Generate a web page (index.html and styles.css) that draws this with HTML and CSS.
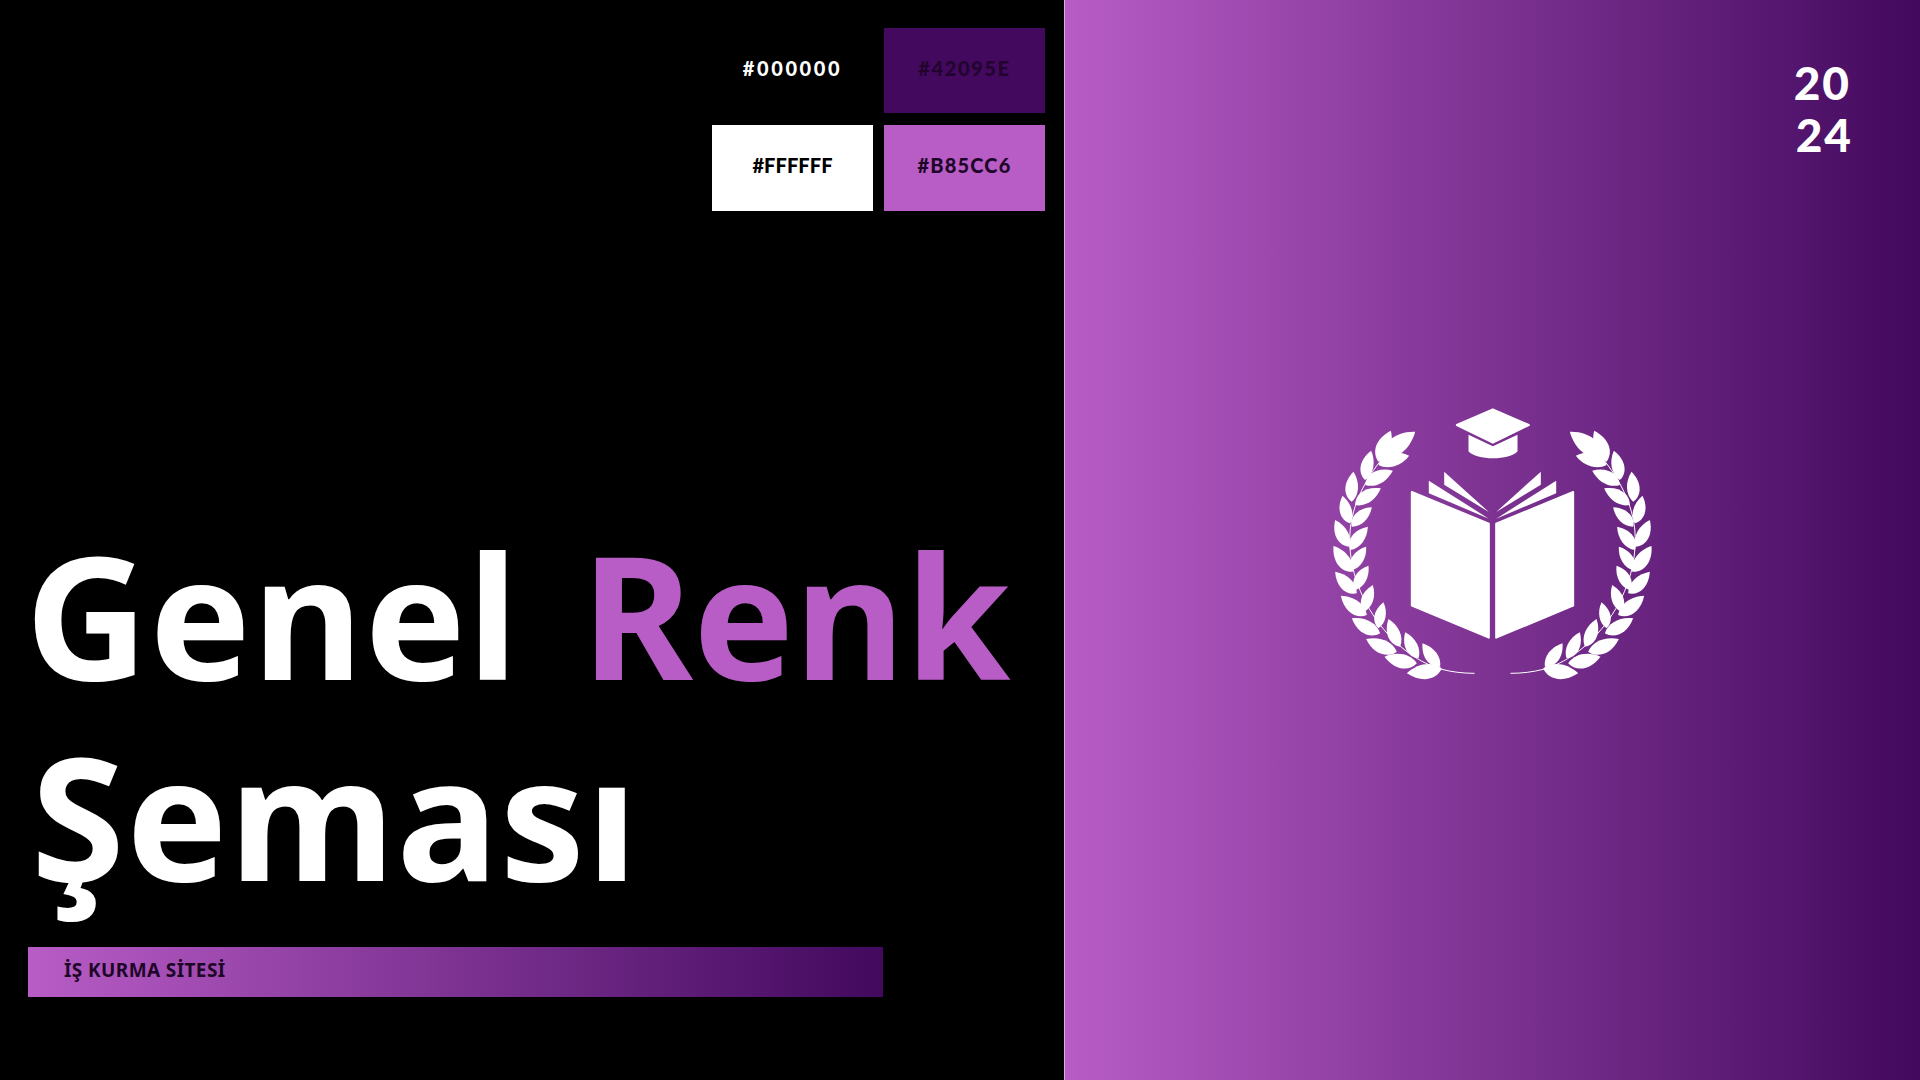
FILE: index.html
```html
<!DOCTYPE html>
<html lang="tr">
<head>
<meta charset="utf-8">
<title>Genel Renk Şeması</title>
<link rel="stylesheet" href="styles.css">
</head>
<body>
<main class="slide">
  <section class="left">
    <div class="swatches">
      <div class="swatch sw-black">#000000</div>
      <div class="swatch sw-dark">#42095E</div>
      <div class="swatch sw-white">#FFFFFF</div>
      <div class="swatch sw-light">#B85CC6</div>
    </div>
    <h1 class="title"><span class="line">Genel <span class="accent">Renk</span></span><span class="line line-two">Şeması</span></h1>
    <div class="bar"><span class="bar-text">İŞ KURMA SİTESİ</span></div>
  </section>
  <section class="right">
    <div class="year"><span class="y1">20</span><span class="y2">24</span></div>
    <svg class="logo" viewBox="0 0 1154 900" aria-hidden="true">
      <defs>
        <path id="leaf" d="M0 0C18 -30 62 -34 100 0C66 24 24 24 0 0Z"/>
        <g id="laurel">
          <path class="stem" d="M268 180C215 240 160 320 150 420C142 520 175 620 240 705C295 775 360 820 425 838C455 846 490 850 522 850"/>
          <use href="#leaf" transform="matrix(.37 -.93 .93 .37 235 215)"/>
          <use href="#leaf" transform="matrix(.95 -.80 .80 .95 250 205)"/>
          <use href="#leaf" transform="matrix(.92 -.28 .28 .92 235 225)"/>
          <use href="#leaf" transform="matrix(.18 -.88 .88 .18 195 270)"/>
          <use href="#leaf" transform="matrix(.83 -.43 .43 .83 195 285)"/>
          <use href="#leaf" transform="matrix(.05 -.90 .90 .05 155 335)"/>
          <use href="#leaf" transform="matrix(.77 -.50 .50 .77 165 345)"/>
          <use href="#leaf" transform="matrix(-.23 -.83 .83 -.23 150 400)"/>
          <use href="#leaf" transform="matrix(.60 -.58 .58 .60 155 410)"/>
          <use href="#leaf" transform="matrix(-.43 -.80 .80 -.43 148 470)"/>
          <use href="#leaf" transform="matrix(.53 -.70 .70 .53 150 480)"/>
          <use href="#leaf" transform="matrix(-.58 -.77 .77 -.58 158 545)"/>
          <use href="#leaf" transform="matrix(.43 -.70 .70 .43 155 540)"/>
          <use href="#leaf" transform="matrix(-.65 -.65 .65 -.65 170 610)"/>
          <use href="#leaf" transform="matrix(.40 -.73 .73 .40 165 600)"/>
          <use href="#leaf" transform="matrix(-.78 -.58 .58 -.78 200 675)"/>
          <use href="#leaf" transform="matrix(.26 -.80 .80 .26 192 665)"/>
          <use href="#leaf" transform="matrix(-.85 -.45 .45 -.85 240 730)"/>
          <use href="#leaf" transform="matrix(.15 -.78 .78 .15 235 715)"/>
          <use href="#leaf" transform="matrix(-.92 -.38 .38 -.92 290 785)"/>
          <use href="#leaf" transform="matrix(-.35 -.83 .83 -.35 300 770)"/>
          <use href="#leaf" transform="matrix(-.97 -.20 .20 -.97 350 820)"/>
          <use href="#leaf" transform="matrix(-.40 -.78 .78 -.40 355 805)"/>
          <use href="#leaf" transform="matrix(-1.05 .15 -.15 -1.05 425 835)"/>
          <use href="#leaf" transform="matrix(-.53 -.70 .70 -.53 420 830)"/>
        </g>
        <g id="half">
          <path class="round" d="M335 306L566 401V743L335 647Z"/>
          <path d="M386 272L566 386L386 310Z"/>
          <path d="M432 245L566 366L432 284Z"/>
        </g>
      </defs>
      <use href="#laurel"/>
      <use href="#laurel" transform="matrix(-1 0 0 1 1154 0)"/>
      <use href="#half"/>
      <use href="#half" transform="matrix(-1 0 0 1 1154 0)"/>
      <path class="round" d="M578 58L686 105L578 158L470 105Z"/>
      <path d="M505 134L578 169L652 134V184C630 212 528 212 505 184Z"/>
    </svg>
  </section>
</main>
</body>
</html>
```

FILE: styles.css
```css
* { box-sizing: border-box; }
html, body { margin: 0; padding: 0; }
body { width: 1920px; height: 1080px; overflow: hidden; background: #000; }
.slide { display: flex; width: 1920px; height: 1080px; font-family: "Noto Sans", sans-serif; }
.left { width: 1064px; height: 1080px; background: #000; display: flex; flex-direction: column; padding: 28px 19px 83px 28px; }
.swatches { align-self: flex-end; display: grid; grid-template-columns: 161px 161px; grid-template-rows: 85px 86px; gap: 12px 11px; }
.swatch { display: flex; align-items: center; justify-content: center; padding-bottom: 6px; font-family: "Lato", sans-serif; font-weight: 900; font-size: 20px; letter-spacing: 1px; }
.sw-black { background: #000; color: #fff; letter-spacing: 2.6px; }
.sw-dark { background: #42095e; color: #22042f; letter-spacing: 1.6px; }
.sw-white { background: #fff; color: #000; letter-spacing: .1px; }
.sw-light { background: #b85cc6; color: #1e0628; letter-spacing: 1.2px; }
.title { margin: auto 0 31px -3px; font-size: 170px; line-height: 201px; font-weight: 700; color: #fff; letter-spacing: 1.5px; word-spacing: 16px; }
.line { display: block; white-space: nowrap; }
.line-two { margin-left: 6px; }
.accent { color: #b85cc6; letter-spacing: 0; }
.bar { width: 855px; height: 50px; flex: none; padding: 10px 0 0 36px; background: linear-gradient(90deg, #b85cc6 0%, #42095e 100%); }
.bar-text { font-size: 19px; line-height: 26px; font-weight: 700; letter-spacing: .4px; color: #1e0628; display: block; }
.right { flex: 1; display: grid; border-left: 1px solid #d9b3e0; background: linear-gradient(90deg, #b85cc6 0%, #42095e 100%); }
.right > * { grid-area: 1 / 1; }
.year { justify-self: end; align-self: start; display: flex; flex-direction: column; align-items: flex-end; margin: 57px 67px 0 0; font-family: "Lato", sans-serif; font-weight: 900; font-size: 46px; line-height: 52px; letter-spacing: 2px; color: #fff; }
.y1 { margin-right: 2px; }
.logo { justify-self: center; align-self: center; width: 385px; height: 300px; margin-top: 0; fill: #fff; }
.stem { fill: none; stroke: #fff; stroke-width: 3; stroke-linecap: round; }
.round { stroke: #fff; stroke-width: 6; stroke-linejoin: round; }
```
